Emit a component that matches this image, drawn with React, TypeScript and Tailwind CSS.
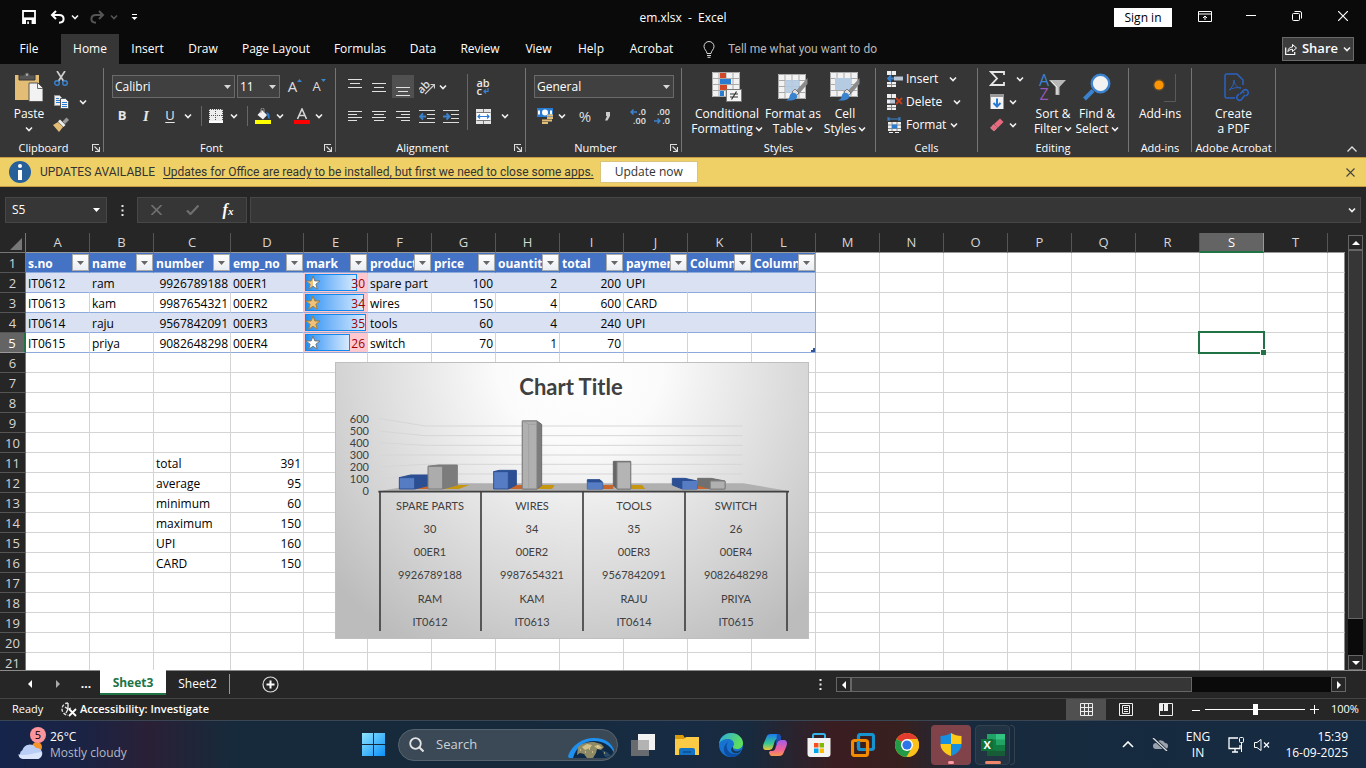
import React from "react";

type Kids = { children?: React.ReactNode };

const Svg = ({ w, h, vb, children }: { w: number; h: number; vb?: string } & Kids) => (
  <svg width={w} height={h} viewBox={vb ?? `0 0 ${w} ${h}`} fill="none" className="block shrink-0" aria-hidden="true">
    {children}
  </svg>
);

const Chev = ({ color = "#f0f0f0" }: { color?: string }) => (
  <Svg w={8} h={6}><path d="M1 1.5 4 4.5 7 1.5" stroke={color} strokeWidth="1.6" /></Svg>
);

const Tri = () => <Svg w={7} h={4}><path d="M0 0h7L3.5 4z" fill="#d8d8d8" /></Svg>;

const IconBtn = ({ label, className, children }: { label: string; className: string } & Kids) => (
  <button type="button" aria-label={label} className={`flex shrink-0 items-center justify-center ${className}`}>{children}</button>
);

/* ---------- title bar ---------- */

const TitleBar = () => (
  <header className="grid h-[34px] shrink-0 grid-cols-[1fr_auto_1fr] items-center">
    <div className="flex items-center pl-[18px]">
      <IconBtn label="Save" className="w-[22px]">
        <Svg w={14} h={14}><path d="M1 1h12v12H1z" stroke="#fff" strokeWidth="1.8" /><path d="M1 7.4h12V13H1z" fill="#fff" /><path d="M4 10h5.6v4H4z" fill="#0a0a0a" /><path d="M5.3 11.5h1.6V14H5.3z" fill="#fff" /></Svg>
      </IconBtn>
      <IconBtn label="Undo" className="ml-[10px] w-4">
        <Svg w={16} h={14}><path d="M6 1 2 5l4 4M2.4 5H9c3 0 4.6 1.8 4.6 4S12 12.6 9 12.8" stroke="#fff" strokeWidth="2" /></Svg>
      </IconBtn>
      <IconBtn label="Undo history" className="w-[17px]"><Chev /></IconBtn>
      <IconBtn label="Redo" className="ml-[6px] w-4">
        <Svg w={16} h={14}><path d="M10 1l4 4-4 4M13.6 5H7C4 5 2.4 6.8 2.4 9S4 12.6 7 12.8" stroke="#555" strokeWidth="2" /></Svg>
      </IconBtn>
      <IconBtn label="Redo history" className="w-[17px]"><Chev color="#555" /></IconBtn>
      <IconBtn label="Customize Quick Access Toolbar" className="ml-[6px] w-[12px]">
        <Svg w={7} h={7}><path d="M1 .5h5" stroke="#fff" /><path d="M.5 3h6L3.5 6z" fill="#fff" /></Svg>
      </IconBtn>
    </div>
    <h1 className="whitespace-pre pt-[2px] text-xs">em.xlsx  -  Excel</h1>
    <div className="flex items-center justify-end">
      <button type="button" className="mr-[10px] h-[19px] w-[58px] bg-white text-xs leading-[19px] text-black">Sign in</button>
      <IconBtn label="Ribbon display options" className="h-[34px] w-[46px] pb-[2px]">
        <Svg w={14} h={11}><path d="M.5.5h13v10H.5zM.5 3h13M7 9V5M5 7l2-2 2 2" stroke="#fff" /></Svg>
      </IconBtn>
      <IconBtn label="Minimize" className="h-[34px] w-[46px] pb-1"><Svg w={10} h={1}><path d="M0 .5h10" stroke="#fff" /></Svg></IconBtn>
      <IconBtn label="Restore" className="h-[34px] w-[46px] pb-[3px]">
        <Svg w={10} h={10}><rect x=".5" y="2.5" width="7" height="7" rx="1" stroke="#fff" /><path d="M2.5.5H8A1.5 1.5 0 0 1 9.500 2v5.500" stroke="#fff" /></Svg>
      </IconBtn>
      <IconBtn label="Close" className="h-[34px] w-[46px] pb-[3px]"><Svg w={10} h={10}><path d="m0 0 10 10M10 0 0 10" stroke="#fff" strokeWidth="1.2" /></Svg></IconBtn>
    </div>
  </header>
);

const TABS: [string, string][] = [
  ["File", "mr-[3px] w-[58px]"], ["Home", "w-[58px] bg-[#363636]"], ["Insert", "w-[57px]"], ["Draw", "w-[54px]"],
  ["Page Layout", "w-[92px]"], ["Formulas", "w-[76px]"], ["Data", "w-[50px]"], ["Review", "w-[64px]"],
  ["View", "w-[53px]"], ["Help", "w-[52px]"], ["Acrobat", "w-[69px]"],
];

const TabRow = () => (
  <nav className="flex h-[30px] shrink-0 items-stretch text-xs">
    {TABS.map(([t, c]) => <button key={t} type="button" className={`shrink-0 whitespace-nowrap ${c}`}>{t}</button>)}
    <label className="flex items-center gap-[13px] pl-[17px] text-[#b8b8b8]">
      <Svg w={12} h={17}><path d="M4 12.500C4 10 1 8.500 1 5.500a5 5 0 0 1 10 0c0 3-3 4.500-3 7zM4 14.500h4M4.500 16.300h3" stroke="#d8d8d8" /></Svg>
      <input aria-label="Tell me what you want to do" placeholder="Tell me what you want to do" className="w-[180px] bg-transparent font-['Roboto',sans-serif] outline-none placeholder:text-[#b8b8b8]" />
    </label>
    <button type="button" className="mr-3 ml-auto mt-[3px] flex h-6 w-[72px] items-center justify-center gap-[5px] border border-[#6a6a6a] bg-[#3c3c3c] text-[13px] font-semibold">
      <Svg w={12} h={12}><path d="M.7 4.500v7h9V9" stroke="#fff" strokeWidth="1.2" /><path d="M3 8.500C3 5.500 5 4 7.500 4V1.500L11.500 5 7.500 8.500V6.300C5.500 6.300 4 7 3 8.500z" stroke="#fff" /></Svg>
      Share <Chev />
    </button>
  </nav>
);

/* ---------- ribbon ---------- */

const Launcher = ({ label }: { label: string }) => (
  <IconBtn label={label} className="absolute right-[3px] bottom-1 h-2 w-2">
    <Svg w={8} h={8}><path d="M.5 7V.5H7M2.500 2.500l4.500 4.500M7.500 3v4.500H3" stroke="#ddd" strokeWidth="1.100" /></Svg>
  </IconBtn>
);

const Group = ({ title, className, launcher, children }: { title: string; className: string; launcher?: boolean } & Kids) => (
  <>
    <section aria-label={title} className={`relative flex shrink-0 flex-col ${className}`}>
      <div className="flex h-[76px]">{children}</div>
      <div className={`h-4 whitespace-nowrap text-center text-[11px] leading-4 ${launcher ? "pr-4" : ""}`}>{title}</div>
      {launcher && <Launcher label={`${title} settings`} />}
    </section>
    <div className="my-1 w-px shrink-0 bg-[#757575]" />
  </>
);

const Big = ({ icon, a, b, arrow, className }: { icon: React.ReactNode; a: string; b?: string; arrow?: boolean; className: string }) => (
  <button type="button" className={`flex shrink-0 flex-col items-center whitespace-nowrap pt-2 text-xs leading-[15px] ${className}`}>
    <span className="mb-[4px] flex h-[30px] items-center justify-center">{icon}</span>
    <span>{a}</span>
    {(b || arrow) && <span className="flex h-[15px] items-center gap-[2px]">{b}{arrow && <Chev />}</span>}
  </button>
);

const Pick = ({ label, value, className }: { label: string; value: string; className: string }) => (
  <span className={`relative flex h-[23px] items-center ${className}`}>
    <select aria-label={label} defaultValue={value} className="h-full w-full appearance-none border border-[#6a6a6a] bg-[#404040] px-[2px] text-xs text-white">
      <option>{value}</option>
    </select>
    <span className="pointer-events-none absolute right-1"><Tri /></span>
  </span>
);

const VSep = () => <span className="h-5 w-px bg-[#666]" />;

const AlignIcon = ({ rows }: { rows: [number, number][] }) => (
  <Svg w={14} h={12}>{rows.map(([x, w], i) => <path key={i} d={`M${x} ${i * 3 + 1.5}h${w}`} stroke="#e0e0e0" />)}</Svg>
);

const VAlign = ({ top }: { top: number }) => (
  <Svg w={14} h={22}>{[0, 1, 2].map((i) => <path key={i} d={`M${i === 1 ? 2 : 0} ${top + i * 4 - 0.5}h${i === 1 ? 10 : 14}`} stroke="#e0e0e0" />)}</Svg>
);

const Indent = ({ right }: { right?: boolean }) => (
  <Svg w={16} h={13}>
    <path d="M0 .5h16M8 4.500h8M8 8.500h8M0 12.500h16" stroke="#dcdcdc" />
    <path d={right ? "M0 6.500h6M3.500 3.500l3 3-3 3" : "M7 6.500H1M4 3.500l-3 3 3 3"} stroke="#3b83cf" strokeWidth="1.800" />
  </Svg>
);

const Grid3 = ({ x = 0, y = 0 }: { x?: number; y?: number }) => (
  <g transform={`translate(${x} ${y})`}>
    <path d="M0 0h28v25H0z" fill="#f2f2f2" />
    <path d="M.5.500h27v24H.500zM7 0v25M14 0v25M21 0v25M0 6.500h28M0 12.500h28M0 18.500h28" stroke="#a9a9a9" />
  </g>
);

const Brush = () => (
  <>
    <path d="M29.500 6 17 20l3 3 9.500-11z" fill="#8b8b8b" />
    <path d="m17 17-3 3 4 4 3-3z" fill="#dedede" stroke="#444" strokeWidth=".6" />
    <path d="M7 28c4 0 4-2 5-5s5-3 7 0-3 7-12 5z" fill="#3b83cf" />
  </>
);

const CellIcon = ({ kind }: { kind: "insert" | "delete" | "format" }) =>
  kind === "format" ? (
    <Svg w={16} h={16}>
      <path d="M1 2h12M1 0v4M13 0v4M3 .500 1 2l2 1.500M11 .500 13 2l-2 1.500" stroke="#3b83cf" />
      <path d="M1 5h13v9H1z" fill="#efefef" /><path d="M5 5v9M10 5v9M1 8h13M1 11.500h13" stroke="#8a8a8a" />
      <path d="M5 7.500h5v4H5z" fill="#2b7bd0" /><path d="M2 15.500h4M8 15.500h4" stroke="#eee" />
    </Svg>
  ) : (
    <Svg w={16} h={16}>
      <path d="M0 0h9v4H0zM0 11h9v5H0z" fill="#efefef" /><path d="M4.500 0v4M4.500 11v5M0 13.500h9" stroke="#8a8a8a" />
      {kind === "insert"
        ? <><path d="M7 5.500h9v4H7z" fill="#b9c6d6" /><path d="M7 7.500H1M4 4.500l-3 3 3 3" stroke="#3b83cf" strokeWidth="1.800" /></>
        : <><path d="M0 5.500h3v4H0z" fill="#efefef" /><path d="M3 5.500h5v4H3z" fill="#b9c6d6" /><path d="m9 4 6 6M15 4 9 10" stroke="#c43e1c" strokeWidth="1.800" /></>}
    </Svg>
  );

const Decimal = ({ inc }: { inc?: boolean }) => (
  <span className="grid grid-rows-2 text-[9px] leading-[9px] font-semibold text-[#e4e4e4]">
    <span className="flex items-center justify-end gap-px">
      {!inc && <Svg w={7} h={6}><path d="M7 3H1M3.500.500 1 3l2.500 2.500" stroke="#3b83cf" strokeWidth="1.500" /></Svg>}{inc ? ".00" : ".0"}
    </span>
    <span className="flex items-center justify-end gap-px">
      {inc && <Svg w={7} h={6}><path d="M0 3h6M3.500.500 6 3 3.500 5.500" stroke="#3b83cf" strokeWidth="1.500" /></Svg>}{inc ? ".0" : ".00"}
    </span>
  </span>
);

const Ribbon = () => (
  <div className="flex h-[93px] shrink-0 bg-[#363636] pb-px">
    <Group title="Clipboard" className="w-[103px]" launcher>
      <Big className="ml-[7px] w-11" a="Paste" arrow icon={
        <Svg w={28} h={30}><path d="M0 3h24v25H0z" fill="#e3bd76" /><path d="M4 6V3h5a3 3 0 0 1 6 0h5v5H4z" fill="#555" stroke="#363636" /><circle cx="12" cy="2.800" r="1.200" fill="#aaa" /><path d="M14 11h9l5 5v13.500H14z" fill="#f2f2f2" stroke="#555" /><path d="M22.500 11v5.500H28" stroke="#666" /></Svg>} />
      <div className="flex flex-col pt-[3px]">
        <IconBtn label="Cut" className="h-[23px] w-5">
          <Svg w={14} h={15}><path d="m3 0 6.500 10M11 0 4.500 10" stroke="#d0d0d0" strokeWidth="1.700" /><circle cx="3" cy="12" r="2.300" stroke="#3b83cf" strokeWidth="1.400" /><circle cx="11" cy="12" r="2.300" stroke="#3b83cf" strokeWidth="1.400" /></Svg>
        </IconBtn>
        <div className="flex">
          <IconBtn label="Copy" className="h-[23px] w-5">
            <Svg w={15} h={14}><path d="M.5.500h5l2 2v8h-7z" fill="#eee" stroke="#999" /><path d="M2 3.500h3M2 5.500h4M2 7.500h4" stroke="#2b7bd0" /><path d="M6.500 3.500h5l3 3v7h-8z" fill="#f4f4f4" stroke="#555" /><path d="M8 7.500h5M8 9.500h5M8 11.500h5" stroke="#2b7bd0" /></Svg>
          </IconBtn>
          <IconBtn label="Copy options" className="ml-1 w-4"><Chev /></IconBtn>
        </div>
        <IconBtn label="Format painter" className="h-[23px] w-5">
          <Svg w={16} h={15}><path d="M0 8 5 5l5 5-4 5z" fill="#e3bd76" /><path d="m5 4.500 2-2 5.500 5.500-2 2z" fill="#eee" /><path d="m9.500 4.500 4-4L16 3l-4 4z" fill="#999" /></Svg>
        </IconBtn>
      </div>
    </Group>

    <Group title="Font" className="w-[231px]" launcher>
      <div className="flex flex-col pt-[11px]">
        <div className="flex pl-2">
          <Pick label="Font" value="Calibri" className="w-[123px]" />
          <Pick label="Font size" value="11" className="ml-[2px] w-[43px]" />
          <IconBtn label="Increase font size" className="ml-[3px] w-6 text-[15px] text-[#dedede]"><span>A</span><span className="self-start pt-1"><Svg w={5} h={3}><path d="M0 3h5L2.500 0z" fill="#3b83cf" /></Svg></span></IconBtn>
          <IconBtn label="Decrease font size" className="w-6 text-[13px] text-[#dedede]"><span>A</span><span className="self-start pt-1"><Svg w={5} h={3}><path d="M0 0h5L2.500 3z" fill="#3b83cf" /></Svg></span></IconBtn>
        </div>
        <div className="mt-[6px] flex h-6 items-center pl-[6px] text-[13px] text-[#e6e6e6]">
          <button type="button" className="w-6 font-bold">B</button>
          <button type="button" className="w-6 font-['Liberation_Serif',serif] text-[15px] font-bold italic">I</button>
          <button type="button" className="w-6 underline underline-offset-2">U</button>
          <IconBtn label="Underline options" className="w-3"><Chev /></IconBtn>
          <span className="flex w-[14px] justify-center"><VSep /></span>
          <IconBtn label="Borders" className="w-4"><Svg w={14} h={14}><path d="M0 0h14v13H0z" fill="#ededed" /><path d="M.5 0v13M6.500 0v13M13.500 0v13M0 .500h14M0 6.500h14" stroke="#555" strokeDasharray="1 1" /><path d="M0 13h14" stroke="#fff" strokeWidth="2" /></Svg></IconBtn>
          <IconBtn label="Border options" className="w-5"><Chev /></IconBtn>
          <span className="flex w-[6px] justify-center"><VSep /></span>
          <IconBtn label="Fill color" className="w-[26px]"><Svg w={16} h={16}><path d="m7 2 5 5-4 4.500L2.500 7z" fill="#f0f0f0" /><path d="M6 5V1.500a1.500 1.500 0 0 1 3 0V4" stroke="#999" /><path d="M11 4c4 1 4 4 3.500 7C12 10 13 7 11 4z" fill="#2b7bd0" /><path d="M0 12h16v4H0z" fill="#ff0" /></Svg></IconBtn>
          <IconBtn label="Fill color options" className="w-2"><Chev /></IconBtn>
          <IconBtn label="Font color" className="ml-[6px] w-6"><Svg w={16} h={16}><path d="M3.500 11 8 1l4.500 10M5 7.500h6" stroke="#d5d5d5" strokeWidth="1.600" /><path d="M0 12h16v4H0z" fill="#f00" /></Svg></IconBtn>
          <IconBtn label="Font color options" className="w-[10px]"><Chev /></IconBtn>
        </div>
      </div>
    </Group>

    <Group title="Alignment" className="w-[189px]" launcher>
      <div className="flex flex-col pt-[11px] pl-[7px]">
        <div className="flex h-[23px]">
          <IconBtn label="Top align" className="w-6"><VAlign top={4} /></IconBtn>
          <IconBtn label="Middle align" className="w-6"><VAlign top={8} /></IconBtn>
          <IconBtn label="Bottom align" className="mx-px w-[22px] bg-[#505050]"><VAlign top={12} /></IconBtn>
          <IconBtn label="Orientation" className="ml-[2px] w-5"><Svg w={16} h={16}><text x="-1" y="11" fontSize="11" fontWeight="600" fill="#e0e0e0" transform="rotate(-45 6 9)">ab</text><path d="m6 15 9-9M11.500 5.500H15.500V9.500" stroke="#ccc" strokeWidth="1.200" /></Svg></IconBtn>
          <IconBtn label="Orientation options" className="w-3"><Chev /></IconBtn>
        </div>
        <div className="mt-[6px] flex h-6">
          <IconBtn label="Align left" className="w-6"><AlignIcon rows={[[0, 14], [0, 9], [0, 14], [0, 9]]} /></IconBtn>
          <IconBtn label="Center" className="w-6"><AlignIcon rows={[[0, 14], [2, 10], [0, 14], [2, 10]]} /></IconBtn>
          <IconBtn label="Align right" className="w-6"><AlignIcon rows={[[0, 14], [5, 9], [0, 14], [5, 9]]} /></IconBtn>
          <IconBtn label="Decrease indent" className="w-6"><Indent /></IconBtn>
          <IconBtn label="Increase indent" className="w-6"><Indent right /></IconBtn>
        </div>
      </div>
      <span className="mt-[10px] ml-1 h-14 w-px bg-[#666]" />
      <div className="flex flex-col pt-[11px] pl-[3px]">
        <IconBtn label="Wrap text" className="h-[23px] w-6">
          <span className="flex flex-col text-[11px] leading-[8px] font-semibold text-[#e8e8e8]">
            <span>ab</span>
            <span className="flex items-center gap-px">c<Svg w={6} h={6}><path d="M5 0v3.500H1M3 1.500l-2 2 2 2" stroke="#3b83cf" strokeWidth="1.200" /></Svg></span>
          </span>
        </IconBtn>
        <div className="mt-[6px] flex h-6">
          <IconBtn label="Merge and center" className="w-6"><Svg w={15} h={15}><path d="M0 0h15v15H0z" fill="#e4e4e4" /><path d="M.5 3.500h14M.5 11.500h14M7.500 0v3.500M7.500 11.500V15" stroke="#777" /><path d="M1 4h13v7H1z" fill="#fff" /><path d="M2 7.500h11M4 5.500l-2 2 2 2M11 5.500l2 2-2 2" stroke="#2b7bd0" strokeWidth="1.200" /></Svg></IconBtn>
          <IconBtn label="Merge options" className="w-5"><Chev /></IconBtn>
        </div>
      </div>
    </Group>

    <Group title="Number" className="w-[155px]" launcher>
      <div className="flex flex-col pt-[11px] pl-2">
        <Pick label="Number format" value="General" className="w-[140px]" />
        <div className="mt-[6px] flex h-6 items-center">
          <IconBtn label="Accounting format" className="w-[22px]"><Svg w={17} h={16}><path d="M0 0h16v9H0z" fill="#2b7bd0" /><circle cx="8" cy="4.500" r="3" fill="#fff" /><path d="M2 2.500v4M14 2.500v4" stroke="#fff" strokeWidth="2" /><path d="M10 7.500h6M10 10h6M5 12.500h10M5 15h6" stroke="#e3bd76" strokeWidth="2" /></Svg></IconBtn>
          <IconBtn label="Accounting options" className="w-3"><Chev /></IconBtn>
          <button type="button" className="ml-[5px] w-6 text-[15px] text-[#dedede]">%</button>
          <IconBtn label="Comma style" className="w-5"><Svg w={5} h={9}><path d="M1 0h4v4L2.500 8.500H0L2 4H1z" fill="#ccc" /></Svg></IconBtn>
          <span className="mx-[6px]"><VSep /></span>
          <IconBtn label="Increase decimal" className="w-[18px]"><Decimal /></IconBtn>
          <IconBtn label="Decrease decimal" className="ml-[6px] w-[18px]"><Decimal inc /></IconBtn>
        </div>
      </div>
    </Group>

    <Group title="Styles" className="w-[193px]">
      <Big className="ml-[6px] w-[78px]" a="Conditional" b="Formatting" arrow icon={
        <Svg w={30} h={30}><Grid3 /><path d="M8 1h6v5H8zM8 13h7v5H8z" fill="#d24726" /><path d="M8 7h11v5H8zM8 19h4v5H8z" fill="#2b7bd0" /><path d="M14.500 17.500h15v12h-15z" fill="#f4f4f4" stroke="#777" /><path d="M18 22h8M18 25h8M24.500 19.500l-5 8" stroke="#333" strokeWidth="1.200" /></Svg>} />
      <Big className="w-[54px]" a="Format as" b="Table" arrow icon={<Svg w={30} h={30}><Grid3 y={2} /><path d="M7 8h14v13H7z" fill="#b4cbe2" opacity=".9" /><Brush /></Svg>} />
      <Big className="w-[50px]" a="Cell" b="Styles" arrow icon={<Svg w={30} h={30}><Grid3 /><path d="M5 6h16v12H5z" fill="#b4cbe2" /><Brush /></Svg>} />
    </Group>

    <Group title="Cells" className="w-[101px]">
      <div className="flex flex-col pt-[3px] pl-[11px] text-xs">
        {([["Insert", "insert", "w-[51px] justify-between"], ["Delete", "delete", "w-[55px] justify-between"], ["Format", "format", "gap-1"]] as const).map(([t, k, w]) => (
          <button key={t} type="button" className="flex h-[23px] items-center gap-[3px]">
            <CellIcon kind={k} /><span className={`flex items-center ${w}`}>{t}<Chev /></span>
          </button>
        ))}
      </div>
    </Group>

    <Group title="Editing" className="w-[150px]">
      <div className="flex flex-col pt-[3px] pl-[11px]">
        <button type="button" aria-label="AutoSum" className="flex h-[23px] items-center gap-[11px]"><Svg w={16} h={15}><path d="M15 4V1H2l6 6.500L2 14h13v-3" stroke="#e8e8e8" strokeWidth="1.800" /></Svg><Chev /></button>
        <button type="button" aria-label="Fill" className="flex h-[23px] items-center gap-[4px]"><Svg w={16} h={16}><path d="M1.500 1h13v14h-13z" fill="#f4f4f4" /><path d="M1 0h14v3H1z" fill="#999" /><path d="M8 4.500v8M4.500 9 8 12.500 11.500 9" stroke="#2b7bd0" strokeWidth="2" /></Svg><Chev /></button>
        <button type="button" aria-label="Clear" className="flex h-[23px] items-center gap-[4px]"><Svg w={16} h={14}><path d="m5 6 6-5.500L14.500 4 8.500 10z" fill="#e8687d" /><path d="M4.500 6.500 8 10l-3 3L1.500 10z" fill="#e8687d" stroke="#f5aab5" strokeWidth=".5" /></Svg><Chev /></button>
      </div>
      <Big className="ml-[7px] w-11" a="Sort &amp;" b="Filter" arrow icon={
        <span className="flex items-center">
          <span className="flex flex-col text-base leading-[14px]"><span className="text-[#3b83cf]">A</span><span className="text-[#9458b8]">Z</span></span>
          <Svg w={18} h={18}><path d="M0 2h17l-6.500 7v8h-4V9z" fill="#b8b8b8" /><path d="m2 3 6 6v7" stroke="#eee" /></Svg>
        </span>} />
      <Big className="w-11" a="Find &amp;" b="Select" arrow icon={
        <Svg w={28} h={28}><path d="m1.500 26 8.500-8.500" stroke="#3b83cf" strokeWidth="4" /><circle cx="17.500" cy="10.500" r="8.800" fill="#f2f2f2" stroke="#3b83cf" strokeWidth="2.400" /></Svg>} />
    </Group>

    <Group title="Add-ins" className="w-[62px]">
      <Big className="w-full" a="Add-ins" icon={<Svg w={34} h={30}><circle cx="16" cy="13" r="6" fill="#ff9500" opacity=".2" /><circle cx="16" cy="13" r="4.600" fill="#ff9500" /><path d="M21 29.500h11.500V2" stroke="#5a5a5a" /></Svg>} />
    </Group>

    <Group title="Adobe Acrobat" className="w-[83px]">
      <Big className="w-full" a="Create" b="a PDF" icon={
        <span className="pl-[6px]"><Svg w={28} h={30}><path d="M20 13V8l-6-6H4a2 2 0 0 0-2 2v20a2 2 0 0 0 2 2h8" stroke="#2a62c0" strokeWidth="1.500" /><path d="M6 18c3-2 5-6 5-10 0 4 3 8 7 8-4-1-9 0-12 2z" stroke="#2a62c0" /><path d="m17 22 4-4a3 3 0 0 1 4 4l-2 2M21 20l-1 1M22 23l-4 5a3 3 0 0 1-4-4l2-2" stroke="#2a62c0" strokeWidth="1.600" /></Svg></span>} />
    </Group>
    <IconBtn label="Collapse the ribbon" className="mt-auto mr-2 mb-px ml-auto h-3 w-3"><Svg w={10} h={6}><path d="M.500 5.500 5 1l4.500 4.500" stroke="#e0e0e0" strokeWidth="1.300" /></Svg></IconBtn>
  </div>
);

/* ---------- message bar and formula bar ---------- */

const MessageBar = () => (
  <div className="flex h-[30px] shrink-0 items-center border-y border-[#c99a45] bg-[#eed067] font-['Roboto',sans-serif] text-xs text-[#333]">
    <span className="ml-[9px] flex h-[22px] w-[22px] items-center justify-center rounded-full bg-[#28609a]">
      <Svg w={6} h={16}><circle cx="3" cy="2" r="2" fill="#fff" /><path d="M1 6h4v10H1z" fill="#fff" /></Svg>
    </span>
    <span className="ml-[9px] w-[123px] whitespace-nowrap">UPDATES AVAILABLE</span>
    <a href="#updates" className="whitespace-nowrap underline underline-offset-2">Updates for Office are ready to be installed, but first we need to close some apps.</a>
    <button type="button" className="ml-[6px] h-[22px] w-[98px] border border-[#d9c27a] bg-white font-['Open_Sans',sans-serif]">Update now</button>
    <IconBtn label="Dismiss" className="mr-[10px] ml-auto h-3 w-3"><Svg w={9} h={9}><path d="m.5.500 8 8M8.500.500l-8 8" stroke="#444" strokeWidth="1.100" /></Svg></IconBtn>
  </div>
);

const Dots = ({ color = "#e8e8e8" }: { color?: string }) => <Svg w={3} h={11}><path d="M.5 0h2v2h-2zM.5 4.500h2v2h-2zM.5 9h2v2h-2z" fill={color} /></Svg>;

const FormulaBar = () => (
  <div className="flex h-[46px] shrink-0 items-start bg-[#262626] px-[5px] pt-[10px] text-xs">
    <label className="flex h-[26px] w-[102px] shrink-0 items-center border border-[#474747] bg-[#363636] pr-[6px] pl-[6px]">
      <input aria-label="Name box" defaultValue="S5" className="w-full bg-transparent outline-none" /><Svg w={7} h={4}><path d="M0 0h7L3.500 4z" fill="#fff" /></Svg>
    </label>
    <span className="flex h-[26px] w-[30px] items-center justify-center"><Dots /></span>
    <div className="flex h-[26px] w-[110px] items-center justify-around border border-[#474747] bg-[#363636]">
      <IconBtn label="Cancel" className="w-4"><Svg w={11} h={10}><path d="m.5 0 10 10M10.500 0 .500 10" stroke="#6f6f6f" strokeWidth="1.700" /></Svg></IconBtn>
      <IconBtn label="Enter" className="w-4"><Svg w={13} h={10}><path d="M1 5.500 4.500 9 12.500.500" stroke="#6f6f6f" strokeWidth="2.200" /></Svg></IconBtn>
      <button type="button" aria-label="Insert function" className="w-4 font-['Liberation_Serif',serif] text-base leading-5 font-bold italic">f<span className="text-[11px]">x</span></button>
    </div>
    <label className="ml-[3px] flex h-[26px] flex-1 items-center border border-[#474747] bg-[#363636] pr-1">
      <input aria-label="Formula" className="w-full bg-transparent px-2 outline-none" /><Chev />
    </label>
  </div>
);

/* ---------- worksheet ---------- */

const COLS: [string, string][] = [
  ["A", "w-[64px]"], ["B", "w-[64px]"], ["C", "w-[77px]"], ["D", "w-[73px]"],
  ..."EFGHIJKLMNOPQRST".split("").map((c): [string, string] => [c, "w-[64px]"]),
  ["", "w-auto"],
];

const HEAD = ["s.no", "name", "number", "emp_no", "mark", "product", "price", "ouantity", "total", "payment", "Column1", "Column2"];

const DATA: Record<number, (string | number)[]> = {
  2: ["IT0612", "ram", 9926789188, "00ER1", 30, "spare part", 100, 2, 200, "UPI", "", ""],
  3: ["IT0613", "kam", 9987654321, "00ER2", 34, "wires", 150, 4, 600, "CARD", "", ""],
  4: ["IT0614", "raju", 9567842091, "00ER3", 35, "tools", 60, 4, 240, "UPI", "", ""],
  5: ["IT0615", "priya", 9082648298, "00ER4", 26, "switch", 70, 1, 70, "", "", ""],
};

const SUMMARY: Record<number, [string, number]> = {
  11: ["total", 391], 12: ["average", 95], 13: ["minimum", 60], 14: ["maximum", 150], 15: ["UPI", 160], 16: ["CARD", 150],
};

const STAR = "M8 1 9.800 5.900 15 6 10.900 9.200 12.300 14.200 8 11.300 3.700 14.200 5.100 9.200 1 6 6.200 5.900z";

const Mark = ({ v }: { v: number }) => (
  <div className="relative h-[19px] pt-[2px] pr-[2px] text-right text-[#9c0006]">
    <span className="absolute top-px bottom-px left-px border border-solid border-[#0f8af0] bg-linear-to-r from-[#1a90f2] to-[#d6eafd]" style={{ width: Math.round((v * 61) / 35) }} />
    <span className="absolute top-[2px] left-px">
      <Svg w={16} h={16}>
        <path d={STAR} fill="#fff" />
        {v > 29 && <path d={v > 33 ? STAR : "M8 1V11.300L3.700 14.200 5.100 9.200 1 6 6.200 5.900z"} fill="#eec27a" />}
        <path d={STAR} stroke={v > 33 ? "#a07c3a" : "#777"} />
      </Svg>
    </span>
    <span className="relative">{v}</span>
  </div>
);

const SheetCell = ({ r, c }: { r: number; c: number }) => {
  const inTable = r <= 5 && c < 12;
  const last = c === COLS.length - 1;
  const banded = inTable && r < 5 && r !== 3;
  const base = "h-5 overflow-hidden border-b border-r p-0 whitespace-nowrap";
  const edge = last ? "border-r-[#8a8a8a]" : inTable && c === 11 ? "border-r-[#8ea9db]" : inTable && r === 1 ? "border-r-[#4472c4]" : banded && c !== 4 ? "border-r-[#d9e1f2]" : "border-r-[#d4d4d4]";
  const bottom = inTable ? "border-b-[#8ea9db]" : "border-b-[#d4d4d4]";
  const fill = !inTable ? "bg-white" : r === 1 ? "bg-[#4472c4]" : c === 4 ? "bg-[#ffc7ce]" : banded ? "bg-[#d9e1f2]" : "bg-white";
  const cls = `${base} ${edge} ${bottom} ${fill}`;

  if (inTable && r === 1)
    return (
      <td className={cls}>
        <div className="flex h-[19px] items-center pl-[2px] font-bold text-white">
          <span className="min-w-0 flex-1 overflow-hidden pt-[2px]">{HEAD[c]}</span>
          <button type="button" aria-label={`Filter ${HEAD[c]}`} className="flex h-[17px] w-[17px] shrink-0 items-center justify-center border border-[#aaa] bg-linear-to-b from-white to-[#e9edf2]">
            <Svg w={7} h={4}><path d="M0 0h7L3.500 4z" fill="#666" /></Svg>
          </button>
        </div>
      </td>
    );
  if (inTable && c === 4) return <td className={cls}><Mark v={DATA[r][4] as number} /></td>;
  if (r === 5 && c === 18)
    return (
      <td className="relative h-5 border-r border-b border-[#d4d4d4] bg-white p-0">
        <span className="absolute -top-[2px] -right-[2px] -bottom-[2px] -left-[2px] border-2 border-[#217346]" />
        <span className="absolute -right-[3px] -bottom-[3px] h-[6px] w-[6px] border-t border-l border-white bg-[#217346]" />
      </td>
    );
  if (r === 5 && c === 11)
    return <td className={`relative ${cls}`}><span className="absolute right-0 bottom-0"><Svg w={4} h={4}><path d="M4 0v4H0V2h2V0z" fill="#305496" /></Svg></span></td>;
  const v = inTable ? DATA[r][c] : SUMMARY[r] && (c === 2 || c === 3) ? SUMMARY[r][c - 2] : "";
  return <td className={cls}><div className={`overflow-hidden pt-[2px] ${typeof v === "number" ? "pr-[2px] text-right" : "pl-[2px]"}`}>{v}</div></td>;
};

const YLABELS = [600, 500, 400, 300, 200, 100, 0];
const CATS = [
  ["SPARE PARTS", "30", "00ER1", "9926789188", "RAM", "IT0612"],
  ["WIRES", "34", "00ER2", "9987654321", "KAM", "IT0613"],
  ["TOOLS", "35", "00ER3", "9567842091", "RAJU", "IT0614"],
  ["SWITCH", "26", "00ER4", "9082648298", "PRIYA", "IT0615"],
];
const CAT_Y = [148, 171, 194, 217, 241, 264];

/* Box with a front face and the side that recedes toward the vanishing point. */
const Box = ({ x, y, w, dx, dy, c, s }: { x: number; y: number; w: number; dx: number; dy: number; c: string; s: string }) => (
  <g strokeWidth="3" stroke={s} strokeLinejoin="round">
    <path d={`M${x} ${y}L${x + dx * 0.7} ${y + dy}H${x + w + dx}V390L${x + w} 402V${y}z`} fill={s} />
    <path d={`M${x} ${y}h${w}V402h${-w}z`} fill={c} />
  </g>
);

const Chart = () => (
  <svg role="img" aria-label="Chart Title" width="474" height="277" viewBox="0 0 474 277" className="absolute top-[129px] left-[335px]" fontFamily="Lato, sans-serif">
    <defs>
      <radialGradient id="bg" gradientUnits="userSpaceOnUse" cx="245" cy="0" r="330">
        <stop offset="0" stopColor="#fff" /><stop offset=".25" stopColor="#fbfbfb" /><stop offset=".75" stopColor="#d2d2d2" /><stop offset="1" stopColor="#bcbcbc" />
      </radialGradient>
    </defs>
    <rect x=".5" y=".5" width="473" height="276" fill="url(#bg)" stroke="#bfbfbf" />
    <text x="236" y="33" fontSize="22" fontWeight="700" fill="#404040" textAnchor="middle">Chart Title</text>
    <g transform="translate(-5 -7) scale(.33333)">
      {[[190, 213], [228, 242], [263, 271], [300, 300], [336, 328], [372, 357]].map(([a, b]) => (
        <path key={a} d={`M146 ${a}L285 ${b}H1238`} stroke="#d6d6d6" strokeWidth="3" fill="none" />
      ))}
      <path d="M150 408 285 385H1240L1376 408z" fill="#b0b0b0" />
      <path d="M250 402 290 390h20v12zM532 402l20-12h26v12zM815 402v-12h35v12zM1100 402l-26-12h40l26 12z" fill="#c9652a" />
      <path d="M336 402l34-12h48l-32 12zM622 402l10-12h42l-8 12zM902 402v-12h34l10 12zM1184 402l-30-12h20l10 12z" fill="#c7960f" />
      <Box x={208} y={368} w={46} dx={48} dy={-8} c="#567dc4" s="#2c4f93" />
      <Box x={294} y={334} w={44} dx={44} dy={-4} c="#acacac" s="#7c7c7c" />
      <Box x={491} y={350} w={44} dx={24} dy={-4} c="#567dc4" s="#2c4f93" />
      <path d="M577 198h44l14 10v184l-14 10h-44z" fill="#7c7c7c" stroke="#6b6b6b" strokeWidth="3" />
      <path d="M577 198h44v204h-44z" fill="#b0b0b0" stroke="#828282" strokeWidth="3" /><path d="M596 208h22M596 208v190M577 198l19 10" stroke="#9a9a9a" strokeWidth="2" />
      <path d="M772 374h38l8 8v20h-46z" fill="#2c4f93" stroke="#2c4f93" strokeWidth="3" /><path d="M772 382h46v20h-46z" fill="#567dc4" />
      <path d="M850 319h52v83h-40l-12-10z" fill="#666" stroke="#666" strokeWidth="3" /><path d="M861 321h41v81h-41z" fill="#b4b4b4" stroke="#828282" strokeWidth="3" />
      <path d="M1027 370h38l36 8v24h-44l-30-12z" fill="#2c4f93" stroke="#2c4f93" strokeWidth="3" /><path d="M1057 378h44v24h-44z" fill="#567dc4" />
      <path d="M1103 370h40l42 8v24h-44l-38-12z" fill="#707070" stroke="#707070" strokeWidth="3" /><path d="M1141 378h44v24h-44z" fill="#b0b0b0" stroke="#828282" strokeWidth="3" />
      <path d="M145 410H1377M150 410V828M453 410V828M759 410V828M1065 410V828M1371 410V828" stroke="#404040" strokeWidth="5" />
    </g>
    {YLABELS.map((v, i) => <text key={v} x="34" y={61 + i * 12} fontSize="11" fill="#404040" textAnchor="end">{v}</text>)}
    {CATS.map((rows, i) => rows.map((t, j) => <text key={`${i}-${j}`} x={95 + i * 102} y={CAT_Y[j]} fontSize="11" fill="#404040" textAnchor="middle">{t}</text>))}
  </svg>
);

const ScrollBtn = ({ label, d, className }: { label: string; d: string; className: string }) => (
  <IconBtn label={label} className={`border border-[#666] bg-[#262626] ${className}`}><Svg w={8} h={8}><path d={d} fill="#fff" /></Svg></IconBtn>
);

const Sheet = () => (
  <div className="flex min-h-0 flex-1 bg-[#262626]">
    <main className="relative min-w-0 flex-1 overflow-hidden">
      <table className="w-full table-fixed border-separate border-spacing-0 text-xs leading-[17px] text-black">
        <colgroup><col className="w-[26px]" />{COLS.map(([, w], i) => <col key={i} className={w} />)}</colgroup>
        <thead>
          <tr className="text-[13px] text-[#d6d6d6]">
            <th aria-label="Select all" className="h-5 border-r border-b border-[#777] p-0"><span className="flex justify-end pt-[3px] pr-[3px]"><Svg w={12} h={12}><path d="M12 0v12H0z" fill="#777" /></Svg></span></th>
            {COLS.map(([c], i) => (
              <th key={i} className={`h-5 p-0 font-normal ${c === "S" ? "border-r border-b-2 border-r-[#999] border-b-[#217346] bg-[#646464] text-white" : c === "" ? "border-b border-[#999]" : "border-r border-b border-r-[#555] border-b-[#999]"}`}>{c}</th>
            ))}
          </tr>
        </thead>
        <tbody>
          {Array.from({ length: 21 }, (_, i) => i + 1).map((r) => (
            <tr key={r}>
              <th className={`h-5 border-r border-b p-0 text-[13px] font-normal ${r === 5 ? "border-r-2 border-r-[#217346] border-b-[#999] bg-[#646464] text-white" : "border-r-[#777] border-b-[#555] bg-[#262626] text-[#d6d6d6]"}`}><div className="pt-[2px]">{r}</div></th>
              {COLS.map((_, c) => <SheetCell key={c} r={r} c={c} />)}
            </tr>
          ))}
        </tbody>
      </table>
      <Chart />
    </main>
    <div className="flex w-[21px] flex-col items-center pt-[2px]">
      <ScrollBtn label="Scroll up" d="M0 6h8L4 2z" className="h-[15px] w-[15px]" />
      <div className="flex w-[15px] flex-1 flex-col bg-[#0a0a0a]"><div className="h-[91%] border border-[#666] bg-[#363636]" /></div>
      <ScrollBtn label="Scroll down" d="M0 2h8L4 6z" className="h-[15px] w-[15px]" />
    </div>
  </div>
);

const SheetTabs = () => (
  <div className="flex h-7 shrink-0 border-t border-[#8a8a8a] bg-[#262626] text-xs">
    <div className="flex w-[100px] items-center pb-[2px] pl-[16px]">
      <IconBtn label="Previous sheet" className="w-7"><Svg w={4} h={8}><path d="M4 0v8L0 4z" fill="#fff" /></Svg></IconBtn>
      <IconBtn label="Next sheet" className="w-7"><Svg w={4} h={8}><path d="M0 0v8l4-4z" fill="#aaa" /></Svg></IconBtn>
      <button type="button" className="w-7 font-bold">...</button>
    </div>
    <button type="button" className="-mt-px h-[25px] w-[66px] border-b-2 border-[#217346] bg-white pt-[3px] font-bold text-[#217346]">Sheet3</button>
    <button type="button" className="mt-[3px] h-5 w-[64px] border-r border-[#999] leading-[18px]">Sheet2</button>
    <IconBtn label="New sheet" className="ml-[32px] w-[17px]"><Svg w={17} h={17}><circle cx="8.500" cy="8.500" r="7.500" stroke="#ddd" strokeWidth="1.200" /><path d="M8.500 4.500v8M4.500 8.500h8" stroke="#fff" strokeWidth="2" /></Svg></IconBtn>
    <div className="ml-auto flex items-center gap-[14px] pr-[20px]"><Dots />
      <div className="flex w-[510px] items-center">
        <ScrollBtn label="Scroll left" d="M6 0v8L2 4z" className="h-[15px] w-[15px]" />
        <div className="flex h-[15px] flex-1 bg-[#0a0a0a]"><div className="w-[71%] border border-[#666] bg-[#363636]" /></div>
        <ScrollBtn label="Scroll right" d="M2 0v8l4-4z" className="h-[15px] w-[15px]" />
      </div>
    </div>
  </div>
);

const StatusBar = () => (
  <footer className="flex h-[22px] shrink-0 items-center border-t border-[#444] bg-[#262626] text-[11px]">
    <span className="w-[49px] pl-3">Ready</span>
    <button type="button" className="flex items-center gap-[3px] pl-3 font-semibold whitespace-nowrap">
      <Svg w={16} h={15}><path d="M7 1a6 6 0 1 0 0 12" stroke="#ddd" strokeWidth="1.400" strokeDasharray="3 1.500" /><path d="M7 1v5M4 5l3 2 3-1M7 7l-2 4" stroke="#eee" strokeWidth="1.300" /><path d="m8 7 7 7M15 7l-7 7" stroke="#fff" strokeWidth="1.800" /></Svg>
      Accessibility: Investigate
    </button>
    <div className="ml-auto flex h-full items-center">
      <IconBtn label="Normal view" className="h-full w-10 bg-[#505050]"><Svg w={13} h={13}><path d="M.5.500h12v12H.500zM4.500 0v13M8.500 0v13M0 4.500h13M0 8.500h13" stroke="#eee" /></Svg></IconBtn>
      <IconBtn label="Page layout view" className="w-10"><Svg w={14} h={13}><path d="M.5.500h13v12H.500zM3.500 2.500h7v8h-7zM5 4.500h4M5 6.500h4M5 8.500h4" stroke="#eee" /></Svg></IconBtn>
      <IconBtn label="Page break preview" className="w-10"><Svg w={14} h={13}><path d="M.5.500h13v12H.500z" stroke="#eee" /><path d="M1 0h3v8H1zM5 0h4v8H5z" fill="#eee" /></Svg></IconBtn>
      <IconBtn label="Zoom out" className="ml-[5px] w-[10px]"><Svg w={8} h={8}><path d="M0 4.500h8" stroke="#fff" /></Svg></IconBtn>
      <input type="range" aria-label="Zoom" min={10} max={190} defaultValue={100} className="mx-1 h-3 w-[100px] appearance-none bg-transparent [&::-webkit-slider-runnable-track]:h-px [&::-webkit-slider-runnable-track]:bg-white [&::-webkit-slider-thumb]:-mt-[5px] [&::-webkit-slider-thumb]:h-[11px] [&::-webkit-slider-thumb]:w-[5px] [&::-webkit-slider-thumb]:appearance-none [&::-webkit-slider-thumb]:bg-white" />
      <IconBtn label="Zoom in" className="w-[10px]"><Svg w={9} h={9}><path d="M0 4.500h9M4.500 0v9" stroke="#fff" /></Svg></IconBtn>
      <span className="w-[47px] pl-3">100%</span>
    </div>
  </footer>
);

/* ---------- taskbar ---------- */

const APPS: [string, React.ReactNode][] = [
  ["Task view", <Svg w={24} h={22}><path d="M7 0h17v16H7z" fill="#f2f2f2" /><path d="M0 6h18v16H0z" fill="#777" opacity=".85" /><path d="M7 6h11v10H7z" fill="#b3b3b3" /></Svg>],
  ["File Explorer", <Svg w={24} h={21}><path d="M0 1h8l2 3v6H0z" fill="#d99a0b" /><path d="M0 5h9l2-2h13v18H0z" fill="#fccb45" /><path d="M4 21v-5a2 2 0 0 1 2-2h12a2 2 0 0 1 2 2v5z" fill="#1472c4" /><path d="M8 18h8" stroke="#0c4f94" strokeWidth="1.500" /></Svg>],
  ["Edge", <Svg w={24} h={24}><defs><linearGradient id="ed" x1="0" y1="0" x2="1" y2=".4"><stop stopColor="#2aa7e6" /><stop offset="1" stopColor="#5fe05a" /></linearGradient></defs><circle cx="12" cy="12" r="12" fill="#1673cf" /><path d="M0 11C1 4 6 0 12 0c7 0 12 5 12 10 0 4-3 6-6 6-3 0-4-1-4-2 0-1 1-1 1-3 0-3-3-5-6-5-4 0-8 2-9 5z" fill="url(#ed)" /><path d="M9 9c-3 4-1 11 6 12 3 .400 5-.600 7-2-3 5-9 6-13 4-5-2-6-10 0-14z" fill="#0c4ea3" /><path d="M14 14c-1 3 3 6 8 3l1-1c-1 3-4 5-8 4-3-1-4-5-1-6z" fill="#162a3b" opacity=".8" /></Svg>],
  ["Copilot", <Svg w={24} h={22}><defs><linearGradient id="c1" x1="0" y1="0" x2="0" y2="1"><stop stopColor="#1a7bf0" /><stop offset=".6" stopColor="#38c98e" /><stop offset="1" stopColor="#f2c63a" /></linearGradient><linearGradient id="c2" x1="0" y1="0" x2="0" y2="1"><stop stopColor="#a25be8" /><stop offset=".6" stopColor="#f0609a" /><stop offset="1" stopColor="#f79a4a" /></linearGradient></defs><path d="M8 0h7c2 0 2.500 2 3 3.500L17 5h-2c-2 0-3 1-3.500 3L10 13c-.600 2-2 3-4 3H3c-3 0-3.500-3-2.500-6l3-7C4.100 1 5.500 0 8 0z" fill="url(#c1)" /><path d="M16 22H9c-2 0-2.500-2-3-3.500L7 17h2c2 0 3-1 3.500-3L14 9c.600-2 2-3 4-3h3c3 0 3.500 3 2.500 6l-3 7c-.600 2-2 3-4.500 3z" fill="url(#c2)" /><path d="M14 0h1c2 0 2.500 2 3 3.500V6c-2 0-3.400 1-4 3l-1.500 5z" fill="#1b4fb8" /></Svg>],
  ["Microsoft Store", <Svg w={24} h={24}><path d="M6 6V2.500A1.500 1.500 0 0 1 7.500 1h9A1.500 1.500 0 0 1 18 2.500V6" stroke="#35b4ea" strokeWidth="2" /><path d="M.5 5h23v16a3 3 0 0 1-3 3h-17a3 3 0 0 1-3-3z" fill="#f3f3f3" /><path d="M7 10h4.500v4.500H7z" fill="#f25022" /><path d="M12.500 10H17v4.500h-4.500z" fill="#7fba00" /><path d="M7 15.500h4.500V20H7z" fill="#00a4ef" /><path d="M12.500 15.500H17V20h-4.500z" fill="#ffb900" /></Svg>],
  ["VMware", <Svg w={24} h={24}><rect x="7.500" y="1.500" width="15" height="15" rx="2" stroke="#1594cf" strokeWidth="3.200" /><rect x="1.500" y="7.500" width="15" height="15" rx="2" stroke="#f38b00" strokeWidth="3.200" /><path d="M7.500 8v6.500a2 2 0 0 0 2 2H15" stroke="#1594cf" strokeWidth="3.200" /></Svg>],
  ["Chrome", <Svg w={24} h={24}><circle cx="12" cy="12" r="12" fill="#fbc11a" /><path d="M12 12 1.600 6A12 12 0 0 1 22.400 6z" fill="#e33b2e" /><path d="M12 12v0L1.600 6a12 12 0 0 0 9.900 18L17 15z" fill="#229a48" /><path d="M12 6H22.400A12 12 0 0 1 11.500 24L17 15z" fill="#fbc11a" /><circle cx="12" cy="12" r="6" fill="#fff" /><circle cx="12" cy="12" r="4.600" fill="#2c74e8" /></Svg>],
];

const Taskbar = () => (
  <div className="flex h-12 shrink-0 items-center border-t border-[#3b4654] bg-[linear-gradient(90deg,#15244a_0%,#1a2344_6%,#2a2036_11%,#162a3b_17%,#162a3b_38%,#172b44_50%,#182a3d_55%,#3a1d21_61%,#38201f_66%,#172a3d_71%,#162a42_100%)]">
    <button type="button" className="flex w-[351px] shrink-0 items-center gap-[7px] pl-[18px] text-left text-xs leading-4">
      <span className="relative block h-[30px] w-[25px]">
        <span className="absolute bottom-0 left-0"><Svg w={25} h={20}><circle cx="19" cy="7" r="5" fill="#f59324" /><path d="M5 19a5 5 0 0 1-.500-9A7.500 7.500 0 0 1 18 8a5.600 5.600 0 0 1 2 11z" fill="#b9cdf5" /><path d="M5 19a5 5 0 0 1-4.500-5c5 3 15-1 23-2a5.600 5.600 0 0 1-3.500 7z" fill="#dbe6fc" /></Svg></span>
        <span className="absolute -top-[3px] left-[12px] flex h-4 w-4 items-center justify-center rounded-full bg-[#fd949b] text-[11px] text-black">5</span>
      </span>
      <span>26°C<br /><span className="text-[#b4b9c4]">Mostly cloudy</span></span>
    </button>
    <IconBtn label="Start" className="w-11"><Svg w={23} h={23}><defs><linearGradient id="w" x1="0" y1="0" x2="1" y2="1"><stop stopColor="#8fe4ff" /><stop offset="1" stopColor="#0a90f8" /></linearGradient></defs><path d="M0 0h11v11H0zM12 0h11v11H12zM0 12h11v11H0zM12 12h11v11H12z" fill="url(#w)" /></Svg></IconBtn>
    <label className="mx-[3px] flex h-8 w-[220px] shrink-0 items-center gap-3 overflow-hidden rounded-full border border-[#56636e] bg-[#3a4955] pr-[3px] pl-[10px]">
      <Svg w={15} h={15}><circle cx="6.500" cy="6.500" r="5.300" stroke="#e4e4e4" strokeWidth="1.800" /><path d="m10.500 10.500 4 4" stroke="#e4e4e4" strokeWidth="2" /></Svg>
      <input type="search" aria-label="Search" placeholder="Search" className="min-w-0 flex-1 bg-transparent text-[13px] outline-none placeholder:text-[#cdd2d7]" />
      <span className="self-end pb-[2px]">
        <Svg w={46} h={20}>
          <clipPath id="e"><path d="M0 18C4 7 14 0 26 0s17 5 20 12c0 4-4 7-8 8H1z" /></clipPath>
          <g clipPath="url(#e)">
            <path d="M0 0h46v20H0z" fill="#1e90f0" />
            <path d="M5 20C8 9 16 3 26 3s17 5 20 12v5z" fill="#0e2a46" />
            <path d="M10 9c4-4 10-5 16-5l7 2 3 3-3 3-4-1-1 4-3 5h-6l-3-4-4-1-3 2z" fill="#8f8a66" />
            <path d="m14 9 5-3 5 1-2 3-5 2zM26 8l5-1 3 3-4 1z" fill="#e0cf92" opacity=".8" />
            <path d="m34 12 5 2 4 4-6 1z" fill="#2a4a66" />
            <path d="M17 14h1M21 11h1M24 14h1M29 8h1M36 15h1M12 12h1" stroke="#ffe9a8" />
          </g>
        </Svg>
      </span>
    </label>
    {APPS.map(([n, icon]) => <IconBtn key={n} label={n} className="h-10 w-11">{icon}</IconBtn>)}
    <IconBtn label="Windows Security" className="relative mx-[2px] h-10 w-10 rounded bg-[#80434a]">
      <Svg w={22} h={23}><clipPath id="s"><path d="M11 0c3 2 7 3 10.500 3v8c0 6-5 10-10.500 12C5.500 21 .500 17 .500 11V3C4 3 8 2 11 0z" /></clipPath><g clipPath="url(#s)"><path d="M0 0h11v11H0zM11 11h11v12H11z" fill="#178fe0" /><path d="M11 0h11v11H11zM0 11h11v12H0z" fill="#fcc916" /></g></Svg>
      <span className="absolute bottom-px h-[3px] w-[6px] rounded-full bg-[#ff9ba3]" />
    </IconBtn>
    <IconBtn label="Excel" className="relative ml-[2px] h-10 w-[35px] rounded border border-[#34424f] bg-[#223343]">
      <Svg w={24} h={22}><path d="M6 0h18v22H6z" fill="#21a366" /><path d="M6 5.500h9V11H6zM6 11h9v11H6z" fill="#107c41" /><path d="M15 0h9v5.500h-9z" fill="#33c481" /><path d="M15 11h9v5.500h-9z" fill="#107c41" /><path d="M6 16.500h18V22H6z" fill="#185c37" /><path d="M0 5h12v12H0z" fill="#0f7038" /><text x="2.500" y="15" fontSize="11" fontWeight="700" fill="#fff">X</text></Svg>
      <span className="absolute bottom-0 h-[3px] w-4 rounded-full bg-[#f0866c]" />
    </IconBtn>
    <span className="h-10 w-[5px] rounded-r border-y border-r border-[#34424f]" />
    <div className="ml-auto flex items-center pr-[18px] text-xs leading-4">
      <IconBtn label="Show hidden icons" className="w-8"><Svg w={12} h={7}><path d="m1 6 5-5 5 5" stroke="#fff" strokeWidth="1.600" /></Svg></IconBtn>
      <IconBtn label="OneDrive" className="w-8"><Svg w={16} h={13}><path d="M4 11a3 3 0 0 1 0-6 5 5 0 0 1 9 0 3 3 0 0 1 0 6z" fill="#9aa3ad" /><path d="m1 0 14 13" stroke="#172a3d" strokeWidth="3" /><path d="m1 0 14 13" stroke="#ddd" strokeWidth="1.300" /></Svg></IconBtn>
      <button type="button" className="w-11 text-center">ENG<br />IN</button>
      <IconBtn label="Network" className="w-8"><Svg w={17} h={16}><path d="M10 1H1v10.500h11V8M4 15h6M7 12v3" stroke="#fff" strokeWidth="1.300" /><rect x="11.500" y=".5" width="4" height="5" rx="1" stroke="#fff" /><path d="M13.500 6v9" stroke="#fff" /></Svg></IconBtn>
      <IconBtn label="Volume muted" className="w-5"><Svg w={16} h={12}><path d="M.5 3.500H3l4-3v11l-4-3H.500z" stroke="#fff" /><path d="m10 3.500 5 5M15 3.500l-5 5" stroke="#fff" strokeWidth="1.200" /></Svg></IconBtn>
      <button type="button" className="w-[76px] text-right whitespace-nowrap">15:39<br />16-09-2025</button>
    </div>
  </div>
);

export default function App() {
  return (
    <div className="flex h-screen flex-col overflow-hidden bg-[#0a0a0a] font-['Open_Sans',sans-serif] text-white">
      <TitleBar />
      <TabRow />
      <Ribbon />
      <MessageBar />
      <FormulaBar />
      <Sheet />
      <SheetTabs />
      <StatusBar />
      <Taskbar />
    </div>
  );
}
